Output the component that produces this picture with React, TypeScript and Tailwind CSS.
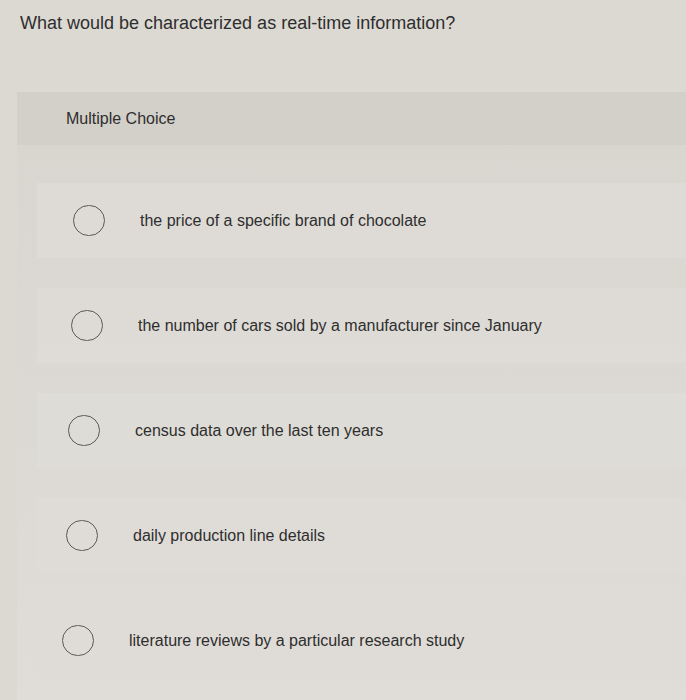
import React from "react";

const options = [
  { text: "the price of a specific brand of chocolate", pad: "pl-[36px]" },
  { text: "the number of cars sold by a manufacturer since January", pad: "pl-[34px]" },
  { text: "census data over the last ten years", pad: "pl-[31px]" },
  { text: "daily production line details", pad: "pl-[29px]" },
  { text: "literature reviews by a particular research study", pad: "pl-[25px]" },
];

function Radio() {
  return <span className="block w-[32px] h-[31px] rounded-full border-[1.5px] border-[#5a5a5a] shrink-0" />;
}

export default function App() {
  return (
    <div
      className="w-[686px] h-[700px] overflow-hidden bg-[#dcd9d3] text-[#2e2e2e]"
      style={{ fontFamily: '"Liberation Sans", Arial, sans-serif' }}
    >
      <div className="pl-[20px] pt-[12px] h-[92px]">
        <h1 className="text-[18px] leading-[22px]">What would be characterized as real-time information?</h1>
      </div>
      <div className="ml-[17px] bg-[#dbd8d2]">
        <div className="h-[53px] bg-[#d3d0c9] flex items-center pl-[49px]">
          <span className="text-[16px]">Multiple Choice</span>
        </div>
        <div className="pt-[38px] pb-[30px] flex flex-col gap-[30px] bg-gradient-to-b from-[#d9d6d0] to-[#e0ddd8]">
          {options.map((o, i) => (
            <div
              key={i}
              className={`ml-[20px] h-[75px] flex items-center gap-[35px] bg-[#dfdcd7]/80 ${o.pad}`}
            >
              <Radio />
              <span className="text-[16px]">{o.text}</span>
            </div>
          ))}
        </div>
      </div>
    </div>
  );
}
